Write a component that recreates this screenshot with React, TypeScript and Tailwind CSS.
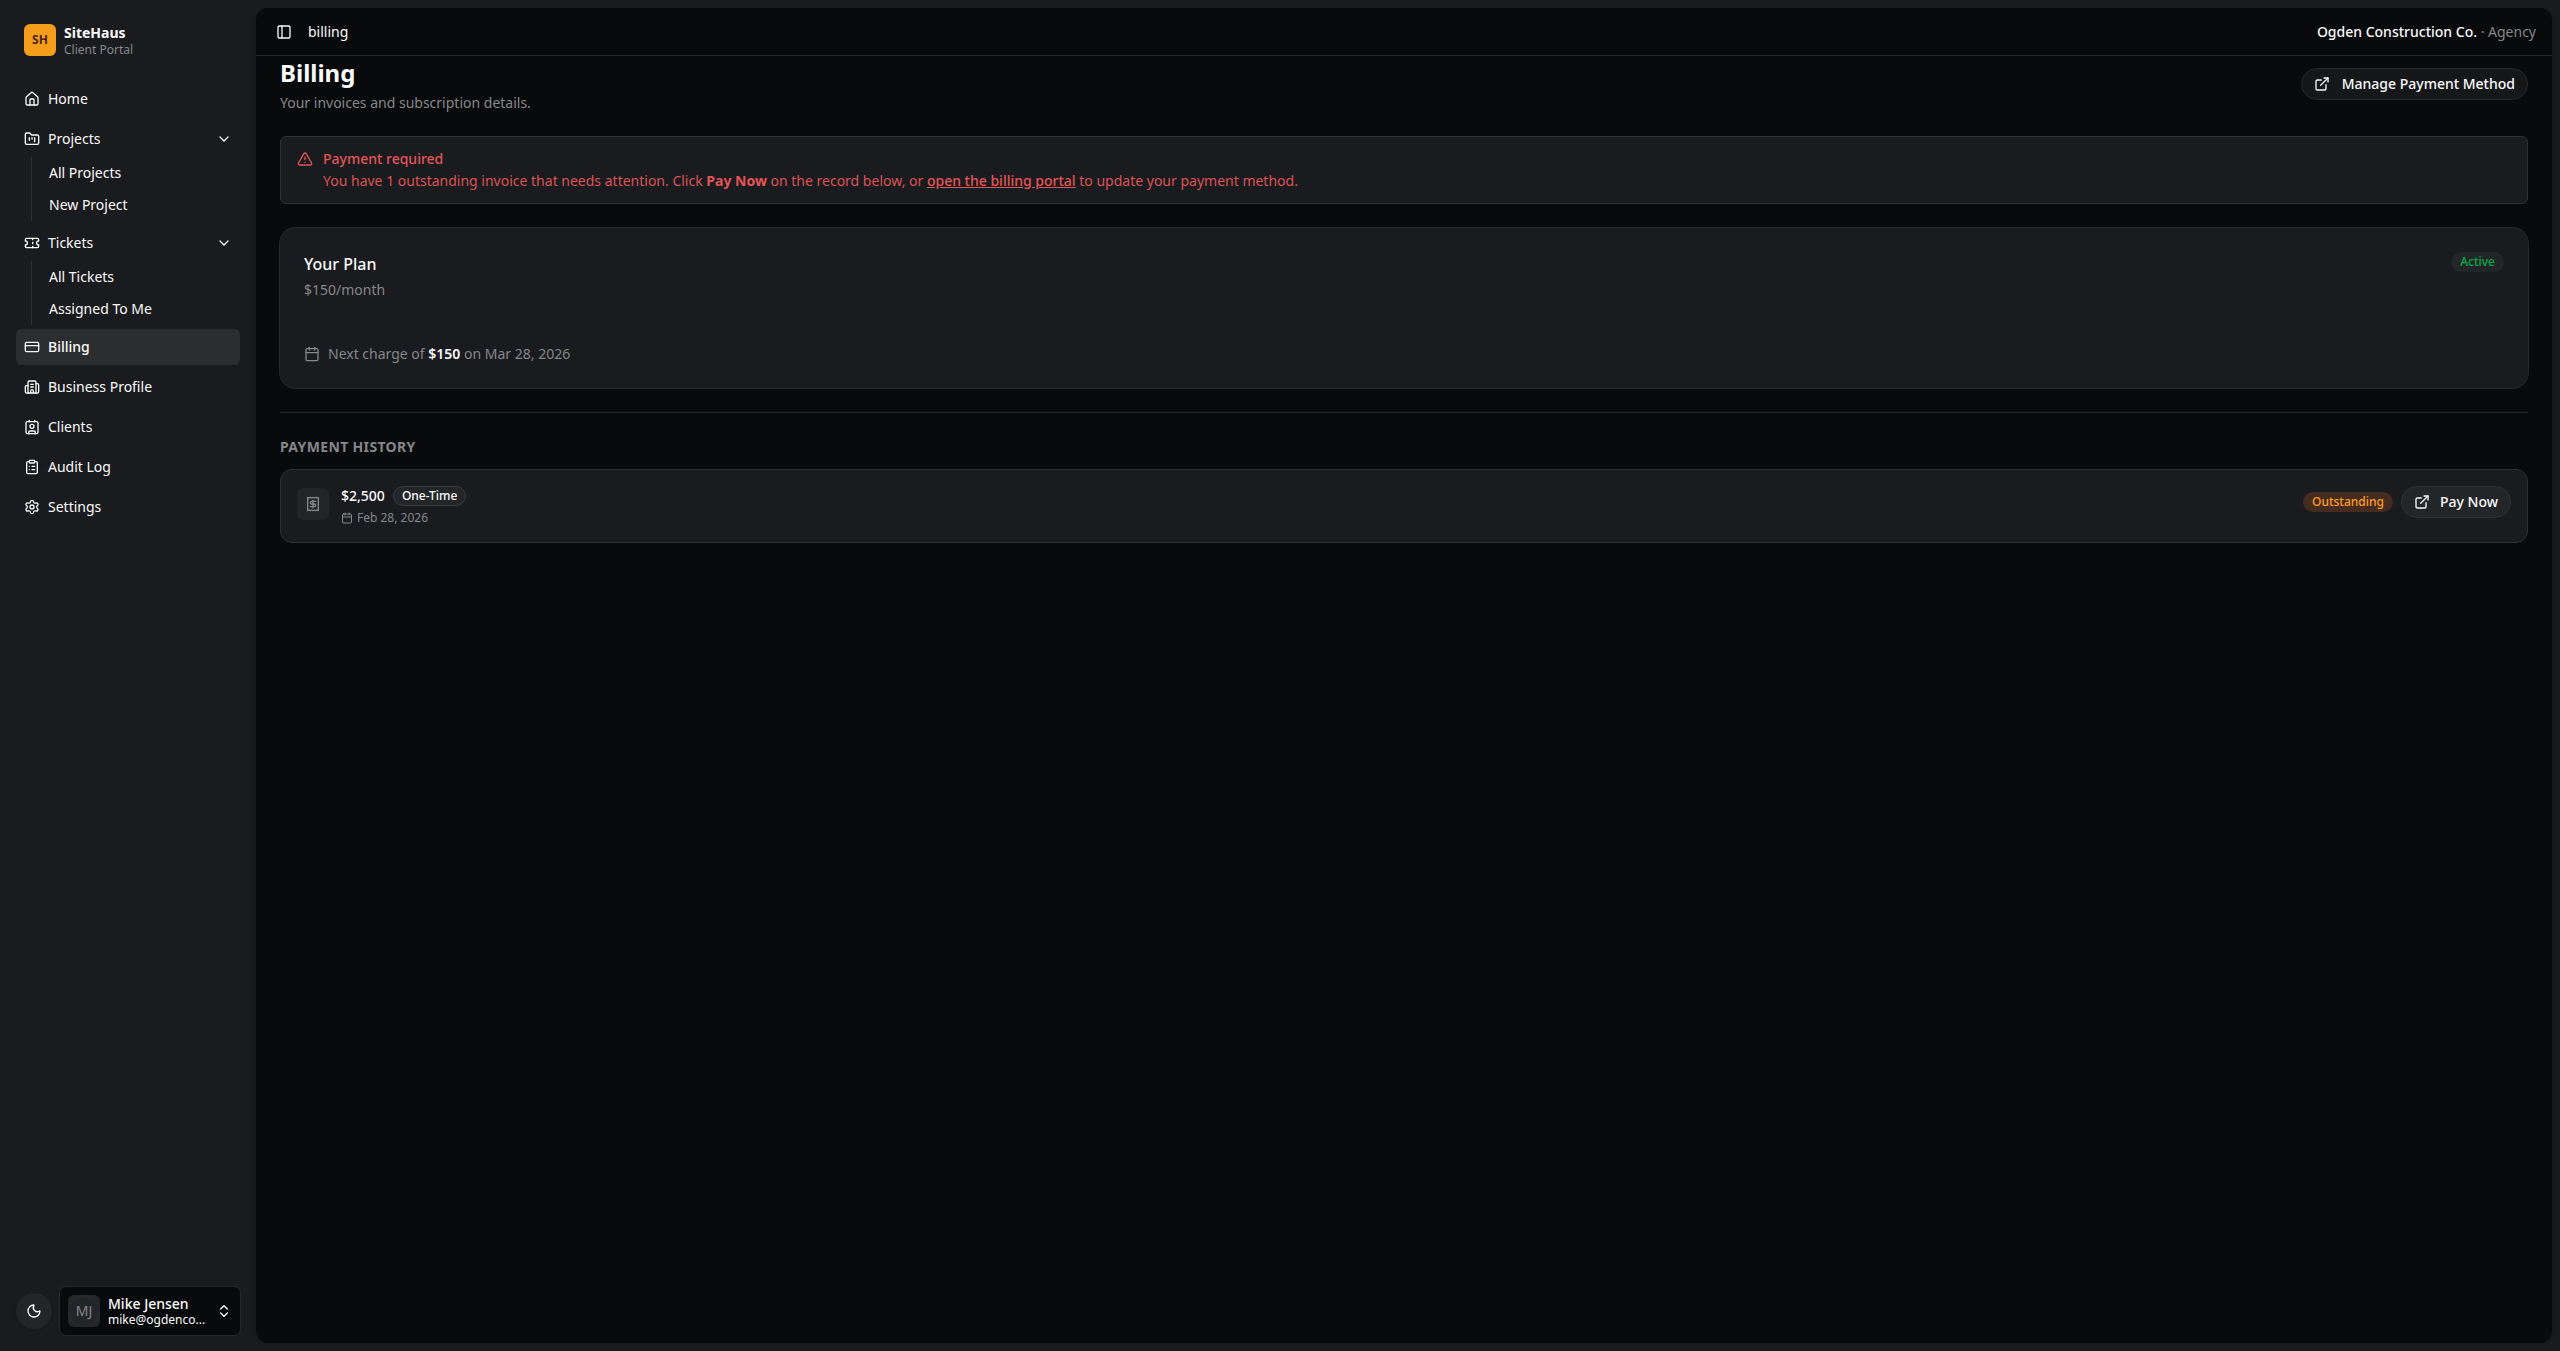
import React from "react";
import {
  Building2,
  Calendar,
  ChevronDown,
  ChevronsUpDown,
  ClipboardList,
  Contact,
  CreditCard,
  ExternalLink,
  FolderKanban,
  House,
  Moon,
  PanelLeft,
  Receipt,
  Settings,
  Ticket,
  TriangleAlert,
  type LucideIcon,
} from "lucide-react";

type NavItem = {
  title: string;
  icon: LucideIcon;
  active?: boolean;
  items?: string[];
};

const navItems: NavItem[] = [
  { title: "Home", icon: House },
  { title: "Projects", icon: FolderKanban, items: ["All Projects", "New Project"] },
  { title: "Tickets", icon: Ticket, items: ["All Tickets", "Assigned To Me"] },
  { title: "Billing", icon: CreditCard, active: true },
  { title: "Business Profile", icon: Building2 },
  { title: "Clients", icon: Contact },
  { title: "Audit Log", icon: ClipboardList },
  { title: "Settings", icon: Settings },
];

const NavLink: React.FC<{ item: NavItem }> = ({ item }) => {
  const Icon = item.icon;

  if (item.items) {
    return (
      <li>
        <button
          type="button"
          aria-expanded="true"
          className="flex h-9 w-full items-center gap-2 rounded-md px-2 text-left hover:bg-[#2c2d2f]"
        >
          <Icon size={16} />
          <span className="flex-1">{item.title}</span>
          <ChevronDown size={16} />
        </button>
        <ul className="ml-[15px] flex flex-col gap-1 border-l border-[#303134] py-0.5 pl-[9px]">
          {item.items.map((sub) => (
            <li key={sub}>
              <a href="#" className="flex h-7 items-center rounded-md px-2 hover:bg-[#2c2d2f]">
                {sub}
              </a>
            </li>
          ))}
        </ul>
      </li>
    );
  }

  return (
    <li>
      <a
        href="#"
        aria-current={item.active ? "page" : undefined}
        className={
          item.active
            ? "flex h-9 items-center gap-2 rounded-md bg-[#2c2d2f] px-2 font-medium"
            : "flex h-9 items-center gap-2 rounded-md px-2 hover:bg-[#2c2d2f]"
        }
      >
        <Icon size={16} />
        <span>{item.title}</span>
      </a>
    </li>
  );
};

const Sidebar: React.FC = () => (
  <aside className="flex w-64 flex-shrink-0 flex-col p-4">
    <div className="flex items-center gap-2 p-2">
      <div className="flex size-8 items-center justify-center rounded-md bg-[#f59e1b] text-xs font-bold text-[#4a2521]">
        SH
      </div>
      <div>
        <p className="text-sm leading-tight font-bold">SiteHaus</p>
        <p className="text-xs leading-tight text-[#85878b]">Client Portal</p>
      </div>
    </div>

    <nav className="mt-4 flex-1">
      <ul className="flex flex-col gap-1">
        {navItems.map((item) => (
          <NavLink key={item.title} item={item} />
        ))}
      </ul>
    </nav>

    <div className="flex items-center gap-2">
      <button
        type="button"
        aria-label="Toggle theme"
        className="flex size-9 flex-shrink-0 items-center justify-center rounded-full bg-[#232628] shadow-sm"
      >
        <Moon size={16} />
      </button>
      <button
        type="button"
        className="flex h-12 min-w-0 flex-1 items-center gap-2 rounded-md bg-[#090a0c] p-2 text-left ring-1 ring-[#26282a]"
      >
        <span className="flex size-8 flex-shrink-0 items-center justify-center rounded-md bg-[#232628]">
          <span className="flex size-8 items-center justify-center rounded-full border border-[#2b2d30] text-sm text-[#85878b]">
            MJ
          </span>
        </span>
        <span className="min-w-0 flex-1">
          <span className="block text-sm leading-tight font-medium">Mike Jensen</span>
          <span className="block text-xs leading-tight">mike@ogdenco...</span>
        </span>
        <ChevronsUpDown size={16} className="flex-shrink-0" />
      </button>
    </div>
  </aside>
);

const Header: React.FC = () => (
  <header className="flex h-12 flex-shrink-0 items-center justify-between border-b border-[#26282a] px-4">
    <div className="flex items-center gap-3">
      <button type="button" aria-label="Toggle sidebar" className="flex size-6 items-center justify-center">
        <PanelLeft size={16} />
      </button>
      <span>billing</span>
    </div>
    <p className="text-[#85878b]">
      <span className="font-medium text-[#fafafa]">Ogden Construction Co.</span> · Agency
    </p>
  </header>
);

const PaymentAlert: React.FC = () => (
  <div
    role="alert"
    className="flex gap-2.5 rounded-md border border-[#303134] bg-[#1a1b1e] px-4 py-3 text-[#e25557]"
  >
    <TriangleAlert size={16} className="mt-0.5 flex-shrink-0" />
    <div className="flex flex-col gap-0.5">
      <p className="font-medium">Payment required</p>
      <p className="text-[#dc5356]">
        You have 1 outstanding invoice that needs attention. Click{" "}
        <strong className="font-bold text-[#e25557]">Pay Now</strong> on the record below, or{" "}
        <a href="#" className="font-medium text-[#e25557] underline">
          open the billing portal
        </a>{" "}
        to update your payment method.
      </p>
    </div>
  </div>
);

const PlanCard: React.FC = () => (
  <section className="rounded-2xl bg-[#1a1b1e] p-6 ring-1 ring-[#26282a]">
    <div className="flex items-start justify-between">
      <div>
        <h2 className="text-base font-medium">Your Plan</h2>
        <p className="mt-1 text-[#85878b]">$150/month</p>
      </div>
      <span className="flex h-5 items-center rounded-full border border-transparent bg-[#232628] px-2 text-xs font-medium text-[#05ad48]">
        Active
      </span>
    </div>
    <p className="mt-11 flex items-center gap-2 text-[#85878b]">
      <Calendar size={16} />
      <span>
        Next charge of <strong className="font-semibold text-[#fafafa]">$150</strong> on Mar 28, 2026
      </span>
    </p>
  </section>
);

const PaymentHistory: React.FC = () => (
  <section className="flex flex-col gap-3">
    <h2 className="font-bold tracking-wide text-[#85878b] uppercase">Payment History</h2>
    <div className="flex items-start gap-3 rounded-xl border border-[#303134] bg-[#1a1b1e] p-4">
      <div className="mt-0.5 flex size-8 items-center justify-center rounded-md bg-[#232628] text-[#85878b]">
        <Receipt size={16} />
      </div>
      <div className="flex flex-1 flex-col gap-1">
        <div className="flex items-center gap-2">
          <span className="font-medium">$2,500</span>
          <span className="flex h-5 items-center rounded-full border border-[#3a3c3f] bg-[#232628] px-2 text-xs font-medium">
            One-Time
          </span>
        </div>
        <p className="flex items-center gap-1 text-xs text-[#85878b]">
          <Calendar size={12} />
          Feb 28, 2026
        </p>
      </div>
      <div className="flex items-center gap-2">
        <span className="flex h-5 items-center rounded-full border border-transparent bg-[#462c20] px-2 text-xs font-medium text-[#ff9f1c]">
          Outstanding
        </span>
        <button
          type="button"
          className="flex h-8 items-center gap-2.5 rounded-full border border-[#303134] bg-[#232628] px-3 font-medium"
        >
          <ExternalLink size={16} />
          Pay Now
        </button>
      </div>
    </div>
  </section>
);

export default function App() {
  return (
    <div className="flex min-h-screen bg-[#1a1b1e] font-['Noto_Sans',sans-serif] text-sm text-[#fafafa]">
      <Sidebar />
      <div className="my-2 mr-2 flex min-w-0 flex-1 flex-col rounded-xl bg-[#090a0c] shadow-sm">
        <Header />
        <main className="flex flex-col gap-6 px-6 pb-6">
          <div className="flex items-center justify-between">
            <div>
              <h1 className="text-2xl leading-snug font-bold">Billing</h1>
              <p className="mt-1 leading-snug text-[#85878b]">Your invoices and subscription details.</p>
            </div>
            <button
              type="button"
              className="flex h-8 items-center gap-3 rounded-full border border-[#26282a] bg-[#151719] px-3 font-medium"
            >
              <ExternalLink size={16} />
              Manage Payment Method
            </button>
          </div>
          <PaymentAlert />
          <PlanCard />
          <hr className="border-[#26282a]" />
          <PaymentHistory />
        </main>
      </div>
    </div>
  );
}
